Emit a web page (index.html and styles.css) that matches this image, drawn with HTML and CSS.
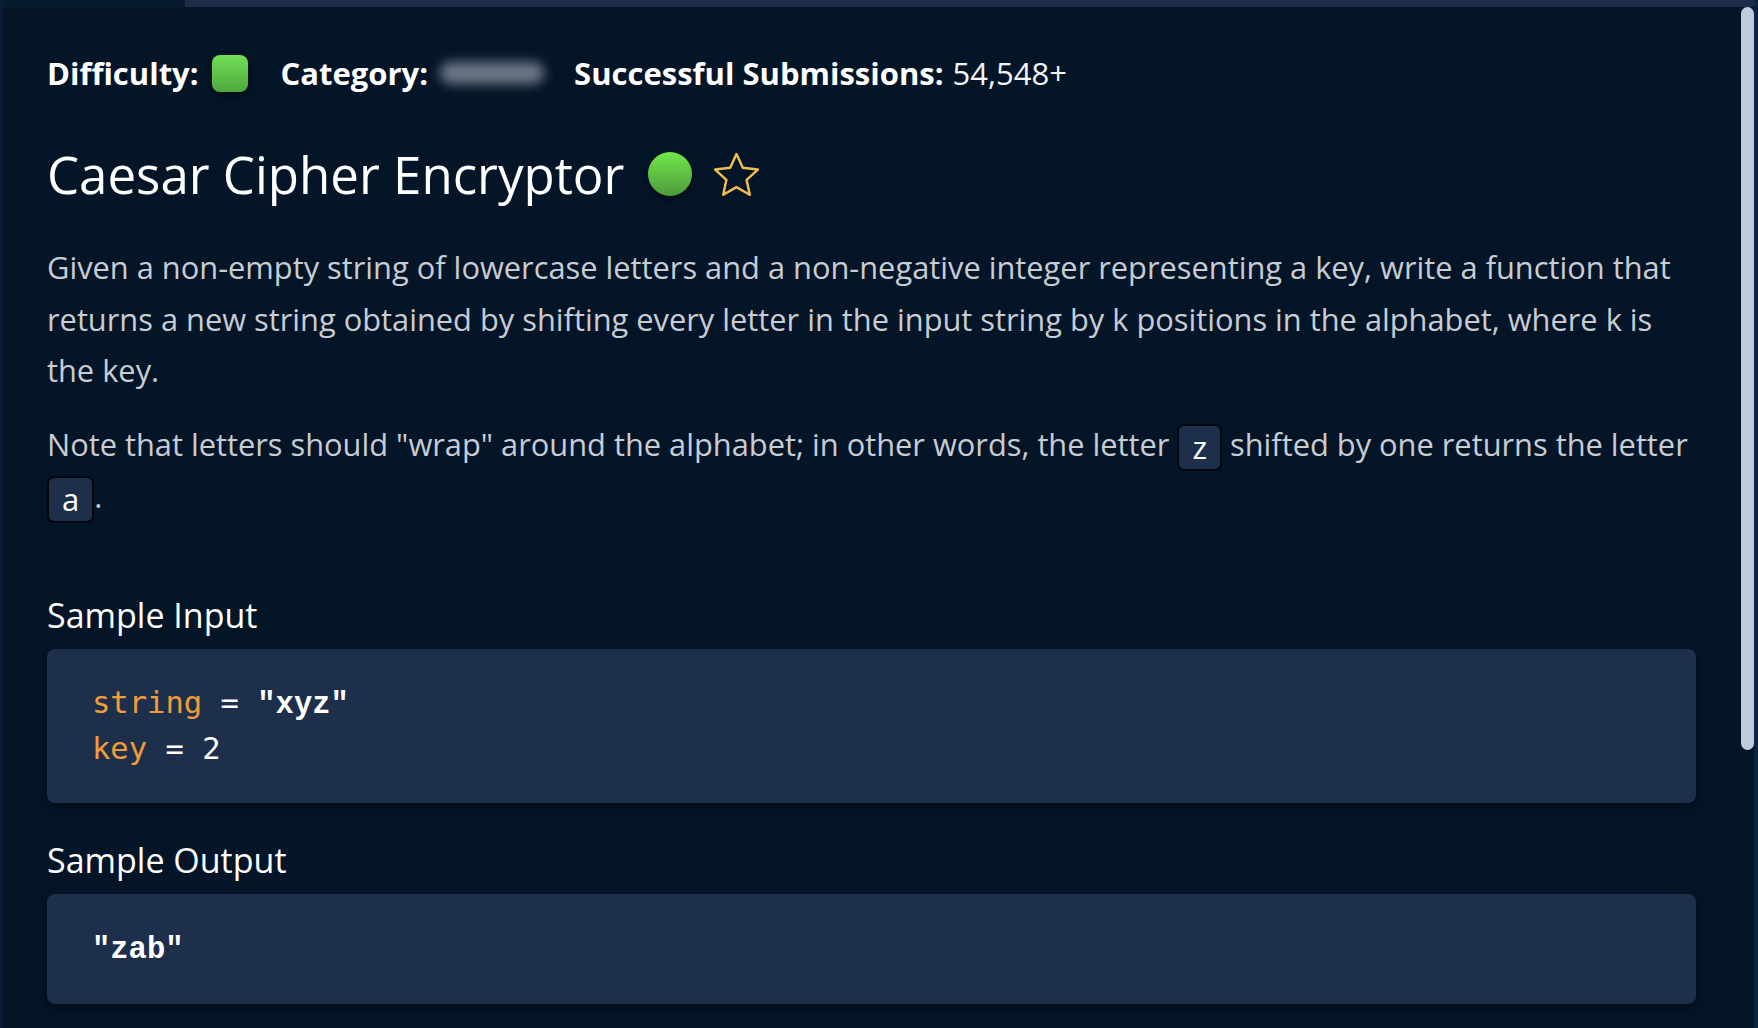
FILE: index.html
```html
<!DOCTYPE html>
<html lang="en">
<head>
<meta charset="utf-8">
<title>Caesar Cipher Encryptor</title>
<link rel="stylesheet" href="styles.css">
</head>
<body>
<div class="frame">
  <div class="topbar">
    <div class="tab-dark"></div>
    <div class="tab-light"></div>
  </div>
  <div class="body-row">
    <main class="content">
      <div class="meta">
        <span class="meta-label">Difficulty:</span>
        <span class="badge-square"></span>
        <span class="meta-label meta-cat">Category:</span>
        <span class="blurred" aria-hidden="true"></span>
        <span class="meta-label meta-sub">Successful Submissions:</span>
        <span class="meta-value">54,548+</span>
      </div>
      <h1 class="title">
        <span>Caesar Cipher Encryptor</span>
        <span class="dot"></span>
        <svg class="star" viewBox="2 2 20 20" width="45" height="45"><path d="M12 2.9l2.8 6.1 6.7.8-5 4.6 1.4 6.6L12 17.6 6.1 21l1.4-6.6-5-4.6 6.7-.8z" fill="none" stroke="#f3bd4e" stroke-width="1.1" stroke-linejoin="round"/></svg>
      </h1>
      <p class="para">Given a non-empty string of lowercase letters and a non-negative integer representing a key, write a function that returns a new string obtained by shifting every letter in the input string by k positions in the alphabet, where k is the key.</p>
      <p class="para">Note that letters should "wrap" around the alphabet; in other words, the letter <code class="chip">z</code> shifted by one returns the letter <code class="chip">a</code>.</p>
      <h2 class="section">Sample Input</h2>
      <pre class="codeblock"><span class="var">string</span> = <span class="str">"xyz"</span>
<span class="var">key</span> = 2</pre>
      <h2 class="section">Sample Output</h2>
      <pre class="codeblock"><span class="str">"zab"</span></pre>
    </main>
    <div class="scrollbar"><div class="thumb"></div></div>
  </div>
</div>
</body>
</html>
```
FILE: styles.css
```css
html, body {
  margin: 0;
  padding: 0;
  background: #041528;
  height: 100%;
  overflow: hidden;
}
.frame {
  height: 1028px;
  display: flex;
  flex-direction: column;
  border-left: 3px solid #0a1d36;
  border-right: 4px solid #0d2342;
  box-sizing: border-box;
  font-family: "Open Sans", "Noto Sans", sans-serif;
}
.topbar {
  display: flex;
  height: 7px;
  flex-shrink: 0;
}
.tab-dark {
  width: 182px;
  background: #081a30;
}
.tab-light {
  flex: 1;
  background: #1e2e4a;
}
.body-row {
  flex: 1;
  display: flex;
  min-height: 0;
}
.content {
  flex: 1;
  padding: 46px 45px 0 44px;
  min-width: 0;
}
.scrollbar {
  width: 13px;
  flex-shrink: 0;
}
.thumb {
  height: 743px;
  background: #bfcbdb;
  border-radius: 7px;
}
.meta {
  display: flex;
  align-items: center;
  height: 40px;
  color: #fff;
  font-size: 31px;
  white-space: nowrap;
}
.meta-label {
  font-weight: 700;
}
.meta-cat {
  margin-left: 33px;
}
.meta-sub {
  margin-left: 30px;
}
.meta-value {
  margin-left: 9px;
  color: #f4f6f9;
}
.badge-square {
  width: 36px;
  height: 37px;
  border-radius: 8px;
  background: linear-gradient(#72e058, #4ea83c);
  margin-left: 13px;
  box-shadow: 0 3px 6px rgba(0,0,0,0.5);
}
.blurred {
  margin-left: 12px;
  width: 104px;
  height: 22px;
  background: #6f7886;
  border-radius: 11px;
  filter: blur(6px);
}
.title {
  display: flex;
  align-items: center;
  margin: 49px 0 0 0;
  height: 64px;
  font-weight: 400;
  font-size: 51px;
  color: #fff;
}
.dot {
  width: 44px;
  height: 44px;
  border-radius: 50%;
  background: linear-gradient(#72e64a, #4d9b3c);
  margin-left: 24px;
  box-shadow: 0 3px 6px rgba(0,0,0,0.45);
}
.star {
  margin-left: 22px;
}
.para {
  margin: 36px 0 0 0;
  font-size: 30.8px;
  line-height: 51.5px;
  color: #c8ccd3;
}
.para + .para {
  margin-top: 22px;
}
.chip {
  display: inline-block;
  font-family: "Open Sans", "Noto Sans", sans-serif;
  color: #fff;
  background: #1e2f4b;
  border: 2px solid #01060d;
  border-radius: 7px;
  padding: 0 13px;
  line-height: 43px;
  font-size: 31px;
  vertical-align: middle;
}
.section {
  margin: 71px 0 13px 0;
  font-size: 34px;
  line-height: 42px;
  font-weight: 400;
  color: #fff;
}
.codeblock + .section {
  margin-top: 36px;
}
.codeblock {
  margin: 0;
  background: #1e2f4b;
  border-radius: 8px;
  padding: 32px 45px;
  font-family: "DejaVu Sans Mono", monospace;
  font-size: 30.5px;
  line-height: 44px;
  color: #fff;
  box-shadow: 0 4px 10px rgba(0,0,0,0.45);
}
.var {
  color: #f29b3b;
}
.str {
  font-family: "Liberation Mono", monospace;
  font-weight: 700;
}
```
